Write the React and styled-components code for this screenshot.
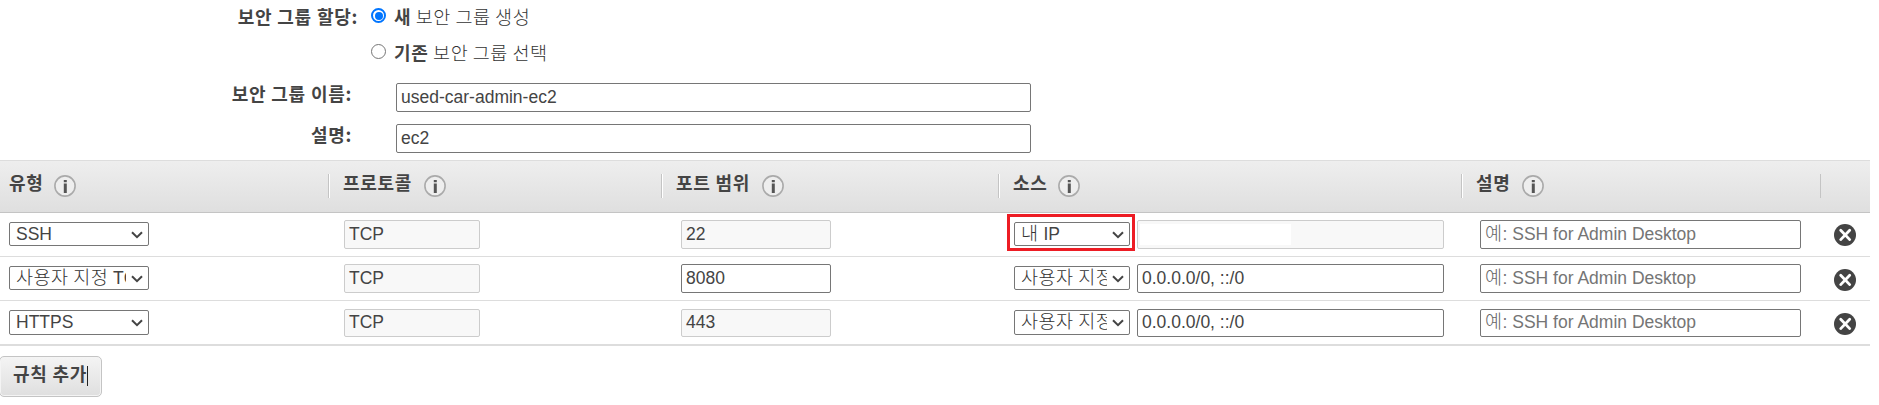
import React from "react";
import styled, { createGlobalStyle, css } from "styled-components";

const GlobalStyle = createGlobalStyle`
  * { box-sizing: border-box; }
  body {
    margin: 0;
    background: #fff;
    color: #444;
    font-family: "Liberation Sans", "Noto Sans CJK KR", sans-serif;
    font-size: 17.5px;
  }
`;

const Page = styled.main`
  width: 1879px;
  height: 405px;
  overflow: hidden;
`;

const Form = styled.section`
  display: flex;
  flex-direction: column;
  height: 160px;
`;

const korean = css`
  font-family: "Noto Sans CJK KR", sans-serif;
  font-size: 18px;
  letter-spacing: 0.7px;
  word-spacing: 0.3px;
  white-space: nowrap;
`;

const koreanLight = css`
  font-size: 18.5px;
  font-weight: 300;
  letter-spacing: 0.5px;
  word-spacing: 0;
  color: ${(p) => p.$tone || "#333"};
`;

const FormRow = styled.div`
  display: flex;
  flex: none;
  height: ${(p) => p.$height}px;
  padding-top: ${(p) => p.$top || 0}px;
`;

const FormLabel = styled.div`
  ${korean}
  width: ${(p) => p.$width}px;
  margin-top: ${(p) => p.$shift || 0}px;
  flex: none;
  text-align: right;
  font-weight: 700;
  line-height: 24px;
`;

const Option = styled.label`
  ${korean}
  display: flex;
  align-items: flex-start;
  margin-left: ${(p) => p.$indent}px;
  line-height: 24px;
  white-space: pre;

  b { font-weight: 700; }
`;

const OptionText = styled.span`
  ${koreanLight}
`;

const Radio = styled.span`
  width: 15px;
  height: 15px;
  margin: 4px 8px 0 0;
  flex: none;
  border: ${(p) => (p.$on ? "2px solid #0075ff" : "1px solid #767676")};
  border-radius: 50%;
  background: ${(p) => (p.$on ? "#0075ff" : "#fff")};
  background-clip: content-box;
  padding: 1.5px;
`;

const Field = styled.div`
  width: ${(p) => p.$width}px;
  height: ${(p) => p.$height || 29}px;
  flex: none;
  overflow: hidden;
  padding: 0 4px;
  border: 1px solid ${(p) => (p.$disabled ? "#ccc" : "#767676")};
  border-radius: 2px;
  background: ${(p) => (p.$disabled ? "#f8f8f8" : "#fff")};
  color: ${(p) => (p.$placeholder ? "#757575" : "#444")};
  line-height: ${(p) => (p.$height === 28 ? 24 : 26)}px;
  white-space: pre;
`;

const Masked = styled.div`
  width: 151px;
  height: 21px;
  margin: 3px 0 0 -2px;
  background: #fff;
`;

const Ko = styled.span`
  ${korean}
  ${koreanLight}
  line-height: 1;
`;

const SelectBox = styled.div`
  display: flex;
  justify-content: space-between;
  width: ${(p) => p.$width}px;
  height: ${(p) => p.$height || 24}px;
  flex: none;
  padding: 0 5px 0 6px;
  border: 1px solid #767676;
  border-radius: 2px;
  background: #fff;

  svg { margin-top: 8px; flex: none; }
`;

const SelectText = styled.span`
  flex: 1;
  height: 22px;
  margin-right: 5px;
  overflow: hidden;
  line-height: 22px;
  white-space: nowrap;
`;

const columns = css`
  display: grid;
  grid-template-columns: 328px 333px 337px 463px 359px 50px;
  width: 1870px;
`;

const HeaderRow = styled.div`
  ${columns}
  height: 53px;
  border-top: 1px solid #ddd;
  border-bottom: 1px solid #c4c4c4;
  background: linear-gradient(#eee, #dfdfdf);
`;

const HeaderCell = styled.div`
  display: flex;
  align-items: flex-start;
  height: 24px;
  margin-top: 13px;
  padding-left: ${(p) => p.$pad}px;
  border-left: ${(p) => (p.$first ? "0" : "1px solid #c4c4c4")};
  box-shadow: ${(p) => (p.$first || p.$last ? "none" : "inset 1px 0 #fff")};

  svg { margin: 1px 0 0 ${(p) => p.$gap}px; flex: none; }
`;

const HeaderText = styled.span`
  ${korean}
  width: ${(p) => p.$width}px;
  margin-top: -4px;
  font-weight: 700;
  line-height: 24px;
`;

const Row = styled.div`
  ${columns}
  height: ${(p) => (p.$last ? 45 : 44)}px;
  border-bottom: ${(p) => (p.$last ? 2 : 1)}px solid #ddd;
`;

const Cell = styled.div`
  display: flex;
  align-items: flex-start;
  gap: 7px;
  padding: ${(p) => p.$top}px 0 0 ${(p) => p.$pad}px;
`;

const Lowered = styled.div`
  position: relative;
  margin-top: ${(p) => p.$by}px;
`;

const Highlight = styled.div`
  position: absolute;
  top: -8px;
  left: -7px;
  width: 128px;
  height: 37px;
  border: 3px solid #ed1c24;
`;

const AddButton = styled.button`
  ${korean}
  display: flex;
  align-items: flex-start;
  width: 103px;
  height: 41px;
  margin: 10px 0 0 -1px;
  padding: 4px 0 0 13px;
  border: 1px solid #c4c4c4;
  border-radius: 5px;
  background: linear-gradient(#f4f4f4, #dfdfdf);
  box-shadow: inset 0 0 0 1px #f4f4f4;
  color: #444;
  font-weight: 700;
  line-height: 24px;
`;

const ButtonText = styled.span`
  width: 74px;
`;

const Caret = styled.span`
  width: 1px;
  height: 20px;
  margin-top: 5px;
  background: #222;
`;

const InfoIcon = () => (
  <svg width="22" height="22" viewBox="0 0 22 22">
    <circle cx="11" cy="11" r="10.1" fill="#eee" stroke="#aaa" strokeWidth="1.6" />
    <path d="M9.8 4.9h3v2.3h-3zM9.8 8.5h3V18h-3z" fill="#555" />
  </svg>
);

const Chevron = () => (
  <svg width="12" height="8" viewBox="0 0 12 8">
    <path d="M1 1.2 6 6.2l5-5" fill="none" stroke="#444" strokeWidth="2" />
  </svg>
);

const RemoveIcon = () => (
  <svg width="22" height="22" viewBox="0 0 22 22">
    <circle cx="11" cy="11" r="11" fill="#444" />
    <path d="m6.7 6.2 9 9.4M15.7 6.2l-9 9.4" stroke="#fff" strokeWidth="2.8" strokeLinecap="round" />
  </svg>
);

const Select = ({ children, ...rest }) => (
  <SelectBox {...rest}>
    <SelectText>{children}</SelectText>
    <Chevron />
  </SelectBox>
);

const headers = [
  { text: "유형", pad: 9, width: 35, gap: 10, first: true },
  { text: "프로토콜", pad: 14, width: 71, gap: 10 },
  { text: "포트 범위", pad: 14, width: 76, gap: 10 },
  { text: "소스", pad: 14, width: 36, gap: 9 },
  { text: "설명", pad: 14, width: 37, gap: 9 },
];

const rules = [
  { type: "SSH", port: "22", source: <><Ko>내</Ko> IP</>, masked: true },
  { type: <><Ko>사용자 지정</Ko> TCP</>, port: "8080", editable: true, source: <Ko>사용자 지정</Ko>, address: "0.0.0.0/0, ::/0" },
  { type: "HTTPS", port: "443", source: <Ko>사용자 지정</Ko>, address: "0.0.0.0/0, ::/0" },
];

const Rule = ({ rule, last }) => {
  const top = last ? 8 : 7;
  const fieldHeight = last ? 28 : 29;
  const selectHeight = last ? 25 : 24;
  const offset = last ? 1 : 2;
  return (
    <Row $last={last}>
      <Cell $top={top + offset} $pad={9}>
        <Select $width={140} $height={selectHeight}>{rule.type}</Select>
      </Cell>
      <Cell $top={top} $pad={16}>
        <Field $disabled $width={136} $height={fieldHeight}>TCP</Field>
      </Cell>
      <Cell $top={top} $pad={20}>
        <Field $disabled={!rule.editable} $width={150} $height={fieldHeight}>{rule.port}</Field>
      </Cell>
      <Cell $top={top} $pad={16}>
        <Lowered $by={offset}>
          <Select $width={116} $height={selectHeight}>{rule.source}</Select>
          {rule.masked && <Highlight />}
        </Lowered>
        <Field $disabled={rule.masked} $width={307} $height={fieldHeight}>
          {rule.masked ? <Masked /> : rule.address}
        </Field>
      </Cell>
      <Cell $top={top} $pad={19}>
        <Field $placeholder $width={321} $height={fieldHeight}>
          <Ko $tone="#666">예</Ko>: SSH for Admin Desktop
        </Field>
      </Cell>
      <Cell $top={last ? 12 : rule.editable ? 12 : 11} $pad={14}>
        <RemoveIcon />
      </Cell>
    </Row>
  );
};

export default function App() {
  return (
    <Page>
      <GlobalStyle />
      <Form>
        <FormRow $height={40} $top={4}>
          <FormLabel $width={358}>보안 그룹 할당:</FormLabel>
          <Option $indent={13}><Radio $on /><b>새</b><OptionText> 보안 그룹 생성</OptionText></Option>
        </FormRow>
        <FormRow $height={43}>
          <Option $indent={371}><Radio /><b>기존</b><OptionText> 보안 그룹 선택</OptionText></Option>
        </FormRow>
        <FormRow $height={41}>
          <FormLabel $width={352} $shift={-2}>보안 그룹 이름:</FormLabel>
          <Cell $top={0} $pad={44}><Field $width={635}>used-car-admin-ec2</Field></Cell>
        </FormRow>
        <FormRow $height={36}>
          <FormLabel $width={352} $shift={-2}>설명:</FormLabel>
          <Cell $top={0} $pad={44}><Field $width={635}>ec2</Field></Cell>
        </FormRow>
      </Form>
      <HeaderRow>
        {headers.map((h) => (
          <HeaderCell key={h.text} $pad={h.pad} $gap={h.gap} $first={h.first}>
            <HeaderText $width={h.width}>{h.text}</HeaderText>
            <InfoIcon />
          </HeaderCell>
        ))}
        <HeaderCell $last />
      </HeaderRow>
      {rules.map((rule, i) => (
        <Rule key={rule.port} rule={rule} last={i === rules.length - 1} />
      ))}
      <AddButton>
        <ButtonText>규칙 추가</ButtonText>
        <Caret />
      </AddButton>
    </Page>
  );
}
